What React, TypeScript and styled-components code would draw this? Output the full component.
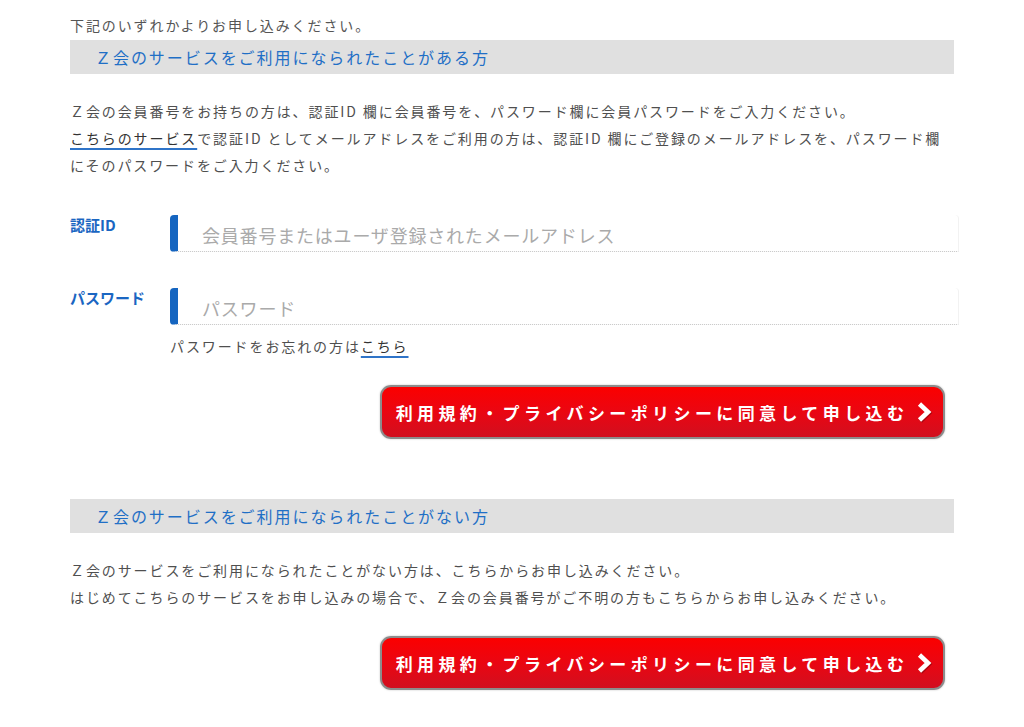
import styled, { createGlobalStyle } from "styled-components";

const GlobalStyle = createGlobalStyle`
    body {
        margin: 0;
        background: #fff;
        font-family: "Noto Sans CJK JP", "Noto Sans", sans-serif;
        color: #555;
    }
`;

const Chevron = () => (
    <svg width="17" height="22" viewBox="0 0 17 22">
        <path d="M3.5 3 L12 11 L3.5 19" fill="none" stroke="rgba(0,0,0,0.25)" strokeWidth="4.6"
              strokeLinejoin="miter" transform="translate(1 1)"/>
        <path d="M3.5 3 L12 11 L3.5 19" fill="none" stroke="#fff" strokeWidth="4.6" strokeLinejoin="miter"/>
    </svg>
);

const ApplyButton = () => (
    <ButtonRow>
        <RedButton type="button">
            利用規約・プライバシーポリシーに同意して申し込む
            <Chevron/>
        </RedButton>
    </ButtonRow>
);

export default function App() {
    return (
        <>
            <GlobalStyle/>
            <Page>
                <Intro>下記のいずれかよりお申し込みください。</Intro>

                <SectionTitle>Ｚ会のサービスをご利用になられたことがある方</SectionTitle>
                <Text>
                    Ｚ会の会員番号をお持ちの方は、認証ID 欄に会員番号を、パスワード欄に会員パスワードをご入力ください。<br/>
                    <Link>こちらのサービス</Link>で認証ID としてメールアドレスをご利用の方は、認証ID 欄にご登録のメールアドレスを、パスワード欄にそのパスワードをご入力ください。
                </Text>

                <Form>
                    <Field>
                        <Label>認証ID</Label>
                        <Input placeholder="会員番号またはユーザ登録されたメールアドレス"/>
                    </Field>
                    <Field>
                        <Label>パスワード</Label>
                        <FieldBody>
                            <Input type="password" placeholder="パスワード"/>
                            <Forgot>パスワードをお忘れの方は<Link>こちら</Link></Forgot>
                        </FieldBody>
                    </Field>
                </Form>

                <ApplyButton/>

                <SectionTitle $spaced>Ｚ会のサービスをご利用になられたことがない方</SectionTitle>
                <Text>
                    Ｚ会のサービスをご利用になられたことがない方は、こちらからお申し込みください。<br/>
                    はじめてこちらのサービスをお申し込みの場合で、Ｚ会の会員番号がご不明の方もこちらからお申し込みください。
                </Text>

                <ApplyButton/>
            </Page>
        </>
    );
}

const Page = styled.main`
    width: 884px;
    margin: 0 auto;
    padding: 12px 0 40px;
`

const Intro = styled.p`
    margin: 0 0 1px;
    font-size: 14px;
    line-height: 27px;
    letter-spacing: 1.9px;
    color: #555;
`

const SectionTitle = styled.h2<{ $spaced?: boolean }>`
    margin: ${p => p.$spaced ? "60px" : "0"} 0 0;
    height: 34px;
    padding-left: 25px;
    background: #e0e0e0;
    font-size: 16px;
    font-weight: 400;
    line-height: 34px;
    letter-spacing: 1.95px;
    color: #1f6fc6;
`

const Text = styled.p`
    margin: 24px 0 0;
    font-size: 14px;
    line-height: 27px;
    letter-spacing: 1.9px;
    color: #4f4f4f;
`

const Link = styled.a`
    color: #333;
    text-decoration: underline;
    text-decoration-color: #2f74c8;
    text-decoration-thickness: 1.5px;
    text-underline-offset: 4px;
`

const Form = styled.div`
    margin-top: 36px;
    display: flex;
    flex-direction: column;
    gap: 36px;
`

const Field = styled.div`
    display: flex;
    align-items: flex-start;
`

const Label = styled.label`
    width: 100px;
    flex-shrink: 0;
    padding-top: 1px;
    font-size: 15px;
    font-weight: 700;
    line-height: 18px;
    color: #1a66c2;
`

const FieldBody = styled.div`
    display: flex;
    flex-direction: column;
`

const Input = styled.input`
    box-sizing: border-box;
    flex-shrink: 0;
    width: 789px;
    height: 37px;
    margin: 0;
    padding: 4px 0 0 24px;
    border: none;
    border-left: 8px solid #1565c0;
    border-right: 1px solid #f2f2f2;
    border-bottom: 1px dotted #c4c4c4;
    border-radius: 4px 4px 0 4px;
    background: #fff;
    font-family: "Noto Sans CJK JP", sans-serif;
    font-size: 18px;
    letter-spacing: 0.8px;
    color: #333;
    outline: none;

    &::placeholder {
        color: #aaa;
    }
`

const Forgot = styled.p`
    margin: 8px 0 0;
    font-size: 14px;
    line-height: 27px;
    letter-spacing: 1.9px;
    color: #4f4f4f;
`

const ButtonRow = styled.div`
    display: flex;
    justify-content: flex-end;
    padding-right: 9px;
    margin-top: 25px;
`

const RedButton = styled.button`
    box-sizing: border-box;
    width: 565px;
    height: 54px;
    display: flex;
    align-items: center;
    justify-content: center;
    gap: 8px;
    padding: 0 0 0 4px;
    border: 2px solid #8c8c8c;
    border-radius: 11px;
    background: linear-gradient(to bottom, #fb0000 0%, #ea0612 50%, #d10f1f 100%);
    font-family: "Noto Sans CJK JP", sans-serif;
    font-size: 17px;
    font-weight: 700;
    letter-spacing: 4.4px;
    color: #fff;
    cursor: pointer;
    box-shadow: 0 0 2px rgba(0, 0, 0, 0.25);
`
